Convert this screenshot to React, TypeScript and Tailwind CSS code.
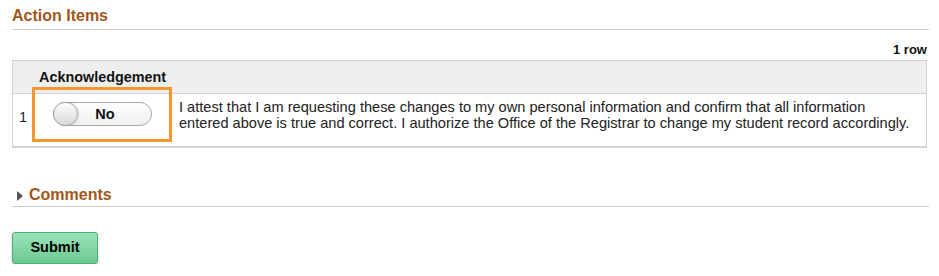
import * as React from "react";

const NoToggle = () => {
	return (
		<div className="flex h-[24px] w-[99px] items-center rounded-full border border-[#a8a8a8] bg-gradient-to-b from-white to-[#efefef]">
			<span className="-ml-px h-[24px] w-[25px] shrink-0 rounded-full border border-[#a8a8a8] bg-gradient-to-b from-[#fdfdfd] to-[#d9d9d9] shadow-[1px_0_2px_rgba(0,0,0,0.15)]" />
			<span className="flex-1 pr-[18px] text-center text-[14.5px] font-bold leading-4 text-[#111]">
				No
			</span>
		</div>
	);
};

export default function App() {
	return (
		<div className="w-[939px] bg-white pl-3 pr-3 pt-[7px] font-['Liberation_Sans',Arial,sans-serif] text-[#222]">
			<div className="-mr-[2px] border-b border-[#cdcdcd] pb-[4px] text-[16px] font-bold leading-[18px] text-[#a3561b]">
				Action Items
			</div>

			<div className="mt-[12px] text-right text-[13px] font-bold leading-4 text-[#111]">
				1 row
			</div>

			<div className="mt-[2px] border-x border-t border-b-2 border-[#d2d2d2]">
				<div className="border-b border-[#d2d2d2] bg-[#efefef] pb-[8px] pl-[26px] pt-[8px] text-[14.4px] font-bold leading-4 text-[#111]">
					Acknowledgement
				</div>
				<div className="flex h-[52px] items-start">
					<div className="w-[19px] shrink-0 pl-[6px] pt-[15px] text-[14.6px] leading-4 text-[#1c1c3a]">
						1
					</div>
					<div className="relative z-10 -mt-[7px] flex h-[55px] w-[140px] shrink-0 items-center justify-center border-[3px] border-[#f7962f] pb-[2px]">
						<NoToggle />
					</div>
					<p className="ml-[7px] pt-[5px] text-[14.6px] leading-4 text-[#222]">
						I attest that I am requesting these changes to my own personal
						information and confirm that all information
						<br />
						entered above is true and correct. I authorize the Office of the
						Registrar to change my student record accordingly.
					</p>
				</div>
			</div>

			<div className="-mr-[2px] mt-[38px] flex items-center gap-[6px] border-b border-[#cdcdcd] pb-[2px]">
				<svg
					width="6"
					height="10"
					viewBox="0 0 6 10"
					className="ml-[5px] mt-[1px]"
					aria-hidden="true"
				>
					<path d="M0 0 L6 5 L0 10 Z" fill="#555555" />
				</svg>
				<span className="text-[16px] font-bold leading-[18px] text-[#a3561b]">
					Comments
				</span>
			</div>

			<button
				type="button"
				className="mt-[25px] h-[32px] w-[86px] rounded-[3px] border border-[#4caf73] bg-gradient-to-b from-[#9ae4b8] to-[#6cc992] text-[14.5px] font-bold text-black shadow-[0_1px_2px_rgba(0,0,0,0.3)]"
			>
				Submit
			</button>
		</div>
	);
}
